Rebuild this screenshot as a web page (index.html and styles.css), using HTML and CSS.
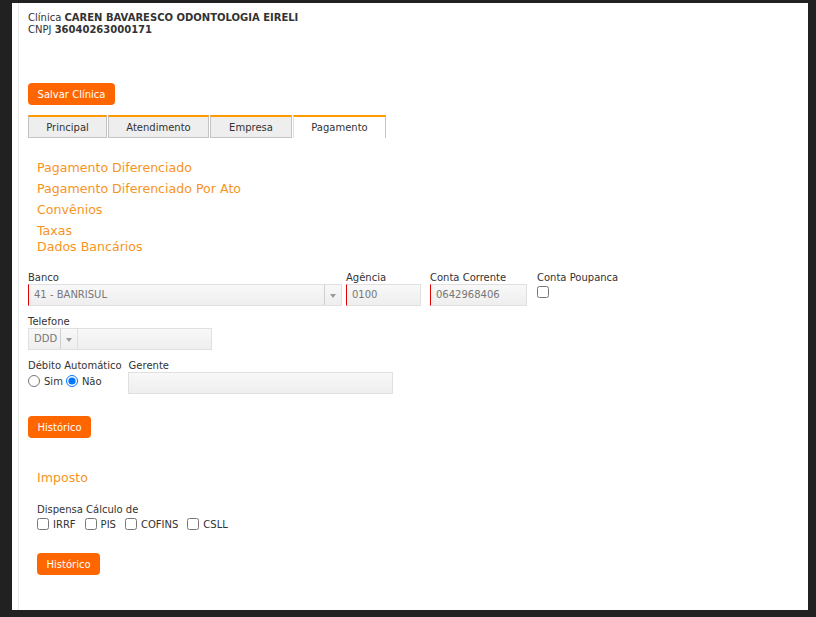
FILE: index.html
```html
<html>
  <head>
    <title>Clínica</title>
    <link rel="stylesheet" href="styles.css">
  </head>
  <body>
    <div class="page">
      <div class="content">
        <div class="clinicInfo">
          <div>Clínica <b>CAREN BAVARESCO ODONTOLOGIA EIRELI</b></div>
          <div>CNPJ <b>36040263000171</b></div>
        </div>

        <button type="button" class="orangeButton saveButton">Salvar Clínica</button>

        <div class="tabs">
          <div class="tab tabPrincipal">Principal</div>
          <div class="tab tabAtendimento">Atendimento</div>
          <div class="tab tabEmpresa">Empresa</div>
          <div class="tab tabActive">Pagamento</div>
        </div>

        <div class="linkList">
          <a class="orangeLink">Pagamento Diferenciado</a>
          <a class="orangeLink">Pagamento Diferenciado Por Ato</a>
          <a class="orangeLink">Convênios</a>
          <a class="orangeLink linkTight">Taxas</a>
          <div class="orangeLink linkTight">Dados Bancários</div>
        </div>

        <div class="formRow firstRow">
          <div class="field fieldBanco">
            <label>Banco</label>
            <div class="fakeSelect required">
              <span class="selectText">41 - BANRISUL</span>
              <span class="selectArrow"></span>
            </div>
          </div>
          <div class="field fieldAgencia">
            <label>Agência</label>
            <div class="fakeInput required">0100</div>
          </div>
          <div class="field fieldConta">
            <label>Conta Corrente</label>
            <div class="fakeInput required">0642968406</div>
          </div>
          <div class="field">
            <label>Conta Poupanca</label>
            <input type="checkbox" class="check">
          </div>
        </div>

        <div class="formRow">
          <div class="field">
            <label>Telefone</label>
            <div class="phoneGroup">
              <div class="fakeSelect dddSelect">
                <span class="selectText">DDD</span>
                <span class="selectArrow"></span>
              </div>
              <div class="fakeInput phoneInput"></div>
            </div>
          </div>
        </div>

        <div class="formRow">
          <div class="field fieldDebito">
            <label>Débito Automático</label>
            <div class="radioGroup">
              <input type="radio" name="debito" class="radio"><span class="radioLabel">Sim</span>
              <input type="radio" name="debito" class="radio" checked><span class="radioLabel">Não</span>
            </div>
          </div>
          <div class="field fieldGerente">
            <label>Gerente</label>
            <div class="fakeInput gerenteInput"></div>
          </div>
        </div>

        <button type="button" class="orangeButton historyButton">Histórico</button>

        <div class="taxSection">
          <div class="orangeLink linkTight">Imposto</div>
          <label class="dispensaLabel">Dispensa Cálculo de</label>
          <div class="checkRow">
            <input type="checkbox" class="check"><span class="checkLabel">IRRF</span>
            <input type="checkbox" class="check"><span class="checkLabel">PIS</span>
            <input type="checkbox" class="check"><span class="checkLabel">COFINS</span>
            <input type="checkbox" class="check"><span class="checkLabel">CSLL</span>
          </div>
          <button type="button" class="orangeButton historyButton2">Histórico</button>
        </div>
      </div>
    </div>
  </body>
</html>
```

FILE: styles.css
```css
body {
  margin: 0;
  background-color: #212121;
  font-family: "DejaVu Sans", Verdana, sans-serif;
  font-size: 10px;
  color: #333;
}
.page {
  margin: 3px 8px 0 12px;
  height: 607px;
  background-color: white;
}
.content {
  margin-left: 6px;
  height: 607px;
  border-left: 1px solid #e8e8e8;
  padding-left: 9px;
}
.clinicInfo {
  padding-top: 9px;
  line-height: 12px;
}

.orangeButton {
  display: block;
  height: 22px;
  border: none;
  border-radius: 4px;
  background-color: #ff6600;
  color: white;
  font-family: "DejaVu Sans", Verdana, sans-serif;
  font-size: 10px;
  padding: 0;
}
.saveButton {margin-top: 47px; width: 87px;}
.historyButton {margin-top: 22px; width: 63px;}
.historyButton2 {margin-top: 23px; width: 63px;}

.tabs {
  display: flex;
  margin-top: 10px;
  height: 23px;
}
.tab {
  box-sizing: border-box;
  border-top: 2px solid #ff9900;
  border-left: 1px solid #c4c4c4;
  border-right: 1px solid #c4c4c4;
  border-bottom: 1px solid #c4c4c4;
  background-color: #eeeeee;
  text-align: center;
  line-height: 22px;
  margin-right: 1px;
}
.tabPrincipal {width: 79px;}
.tabAtendimento {width: 101px;}
.tabEmpresa {width: 82px;}
.tabActive {
  width: 93px;
  background-color: white;
  border-left: 1px solid #e0e0e0;
  border-bottom: none;
}

.linkList {
  padding-left: 9px;
  padding-top: 22px;
}
.orangeLink {
  display: block;
  color: #f7941d;
  font-size: 12.6px;
  line-height: 16px;
  margin-bottom: 5px;
}
.linkTight {margin-bottom: 0;}

.formRow {
  display: flex;
  margin-top: 10px;
}
.firstRow {margin-top: 17px;}
.field label {
  display: block;
  line-height: 12px;
}
.fieldBanco {margin-right: 4px;}
.fieldAgencia {margin-right: 9px;}
.fieldConta {margin-right: 10px;}
.fieldDebito {margin-right: 6px;}
.fieldGerente label {padding-left: 1px;}

.fakeInput, .fakeSelect {
  box-sizing: border-box;
  height: 22px;
  border: 1px solid #e0e0e0;
  background: linear-gradient(#f8f8f8, #eeeeee);
  color: #777;
  line-height: 20px;
  padding-left: 5px;
}
.required {border-left: 1px solid #e30000;}
.fieldBanco .fakeSelect {width: 314px;}
.fieldAgencia .fakeInput {width: 75px;}
.fieldConta .fakeInput {width: 97px;}
.fakeSelect {
  display: flex;
  padding-right: 0;
}
.selectText {flex: 1;}
.selectArrow {
  width: 16px;
  border-left: 1px solid #d0d0d0;
  position: relative;
}
.selectArrow::after {
  content: "";
  position: absolute;
  left: 5px;
  top: 9px;
  border-left: 3px solid transparent;
  border-right: 3px solid transparent;
  border-top: 4px solid #999;
}

.phoneGroup {display: flex;}
.dddSelect {width: 50px;}
.phoneInput {width: 134px; border-left: none;}
.gerenteInput {width: 265px;}

.check {
  width: 12px;
  height: 12px;
  margin: 2px 0 0 0;
}
.radioGroup {
  display: flex;
  align-items: center;
  margin-top: 3px;
}
.radio {
  width: 12px;
  height: 12px;
  margin: 0;
}
.radioLabel {margin: 0 3px 0 4px;}

.taxSection {
  padding-left: 9px;
  margin-top: 32px;
}
.dispensaLabel {
  display: block;
  line-height: 12px;
  margin-top: 18px;
}
.checkRow {
  display: flex;
  align-items: center;
  margin-top: 2px;
}
.checkRow .check {margin: 0;}
.checkLabel {margin: 0 9px 0 4px;}
```
